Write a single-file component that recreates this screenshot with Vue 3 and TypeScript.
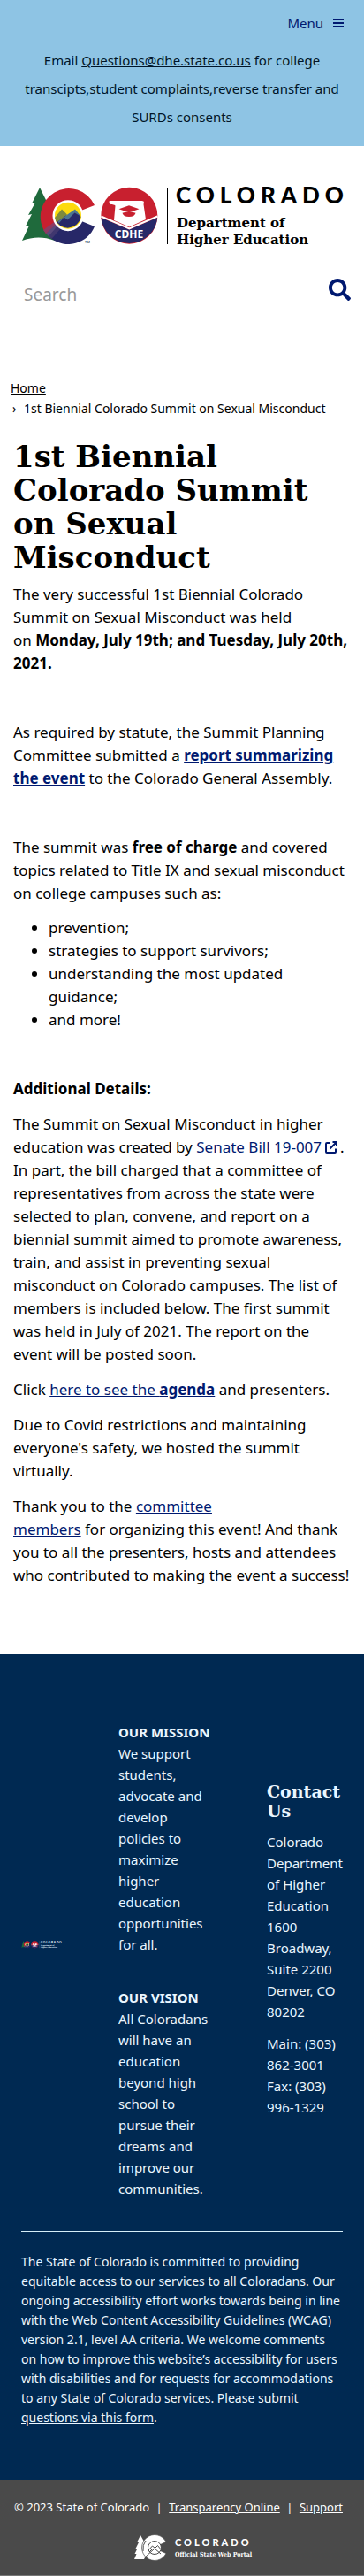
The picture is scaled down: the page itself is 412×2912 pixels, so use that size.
<script setup lang="ts">
import { ref } from 'vue'

const query = ref('')
const menuOpen = ref(false)
const topics: string[] = [
  'prevention;',
  'strategies to support survivors;',
  'understanding the most updated guidance;',
  'and more!',
]
</script>

<template>
  <div class="page">
    <svg class="defs" aria-hidden="true">
      <symbol id="co-logo" viewBox="24 210 366 70" overflow="visible">
        <path
          fill="#1f6a3c"
          d="M45 212 36 230l4-1-8 14 4-1-7 13.500 4-.5-8 17c12-4.500 24-5 37 0l8-10V226L54 230z"
        />
        <path
          fill="#c8202f"
          d="M77 243.700 107 232A32 32 0 1 0 52 264z"
        />
        <path fill="#272868" d="M77 243.700 107 256A32 32 0 0 1 58 269.500z" />
        <path fill="#8d3a63" d="M64 249 49 260l3 4 15-13z" />
        <path fill="#5a4a7c" d="M66 251 52 264l3 3 14-13z" />
        <path fill="#40376f" d="M68 252 55 267l3.500 3 13-15z" />
        <circle cx="77" cy="243.700" r="17.500" fill="#fff" />
        <circle cx="77" cy="243.700" r="15" fill="#fcdb0d" />
        <path fill="#272868" d="M62.500 247.500 70 240l7 5 8-7 6.500 7A15 15 0 0 1 62.500 247.500z" />
        <path fill="#7d8b3c" d="M62 246 70 236.500l6 6-12 9z" />
        <path fill="#4c7690" d="M66 250 77 242l8-5.500 6.500 8-7-4-8 8-4-3-6 7z" />
        <text x="96" y="275" class="tm">TM</text>
        <circle cx="146.300" cy="243.700" r="32" fill="#c8202f" />
        <path fill="#272868" d="M114.500 246A32 32 0 0 0 178.200 246L146.300 259.500z" />
        <path
          fill="none"
          stroke="#fff"
          stroke-width="2"
          d="M114.400 244.500 146.300 258.300 178.200 244.500"
        />
        <path
          fill="#fff"
          d="M124 227h36.500c3 0 2.500 2 2 4l2.500 17-18.700 8.500L129 249l1.500-16.500c-1-1.500-3-.5-5-1.500-2-1-2.500-3.500-1.500-4z"
        />
        <path fill="#c8202f" d="m134.500 236.300 11.500-4 11.500 4-11.500 4z" />
        <path fill="#c8202f" d="M138.500 240.800q7.500-2.500 15 0-1 4.200-7.500 4.200t-7.500-4.200z" />
        <text x="146" y="269" class="badge">CDHE</text>
        <path stroke="currentColor" stroke-width="1" d="M189.500 212v64" />
        <text x="199" y="230" class="wordmark">COLORADO</text>
        <text x="200" y="257" class="dept">Department of</text>
        <text x="200" y="276" class="dept">Higher Education</text>
      </symbol>
    </svg>

    <header>
      <div class="banner">
        <button class="menu" type="button" :aria-expanded="menuOpen" @click="menuOpen = !menuOpen">
          Menu
          <svg width="12" height="12" viewBox="0 0 12 12" aria-hidden="true">
            <path d="M0 1h12v2H0zM0 5h12v2H0zM0 9h12v2H0z" fill="currentColor" />
          </svg>
        </button>
        <p>
          Email <a href="#email">Questions@dhe.state.co.us</a> for college transcipts,student
          complaints,reverse transfer and SURDs consents
        </p>
      </div>
      <a class="logo" href="#home" aria-label="Colorado Department of Higher Education">
        <svg viewBox="0 0 366 70" aria-hidden="true"><use href="#co-logo" width="366" height="70" /></svg>
      </a>
      <form class="search" role="search" @submit.prevent>
        <input v-model="query" type="search" placeholder="Search" aria-label="Search" />
        <button type="submit" aria-label="Search">
          <svg width="25" height="25" viewBox="0 0 512 512" aria-hidden="true">
            <path
              fill="currentColor"
              d="M505 442.700 405.300 343c-4.500-4.500-10.600-7-17-7H372c27.600-35.300 44-79.700 44-128C416 93.100 322.900 0 208 0S0 93.100 0 208s93.100 208 208 208c48.300 0 92.700-16.400 128-44v16.300c0 6.400 2.500 12.500 7 17l99.700 99.700c9.400 9.400 24.600 9.400 33.900 0l28.300-28.300c9.400-9.400 9.400-24.600.1-34zM208 336c-70.700 0-128-57.200-128-128 0-70.700 57.200-128 128-128 70.700 0 128 57.200 128 128 0 70.700-57.200 128-128 128z"
            />
          </svg>
        </button>
      </form>
    </header>

    <nav class="crumbs" aria-label="Breadcrumb">
      <ol>
        <li><a href="#home">Home</a></li>
        <li class="current"><span class="sep">›</span>1st Biennial Colorado Summit on Sexual Misconduct</li>
      </ol>
    </nav>

    <main>
      <h1>1st Biennial Colorado Summit on Sexual Misconduct</h1>
      <section class="intro">
        <p>
          The very successful 1st Biennial Colorado Summit on Sexual Misconduct was held
          on&nbsp;<strong>Monday, July 19th; and Tuesday, July 20th, 2021.</strong>
        </p>
        <p>
          As required by statute, the Summit Planning Committee submitted a
          <a href="#report"><strong>report summarizing the event</strong></a> to the Colorado General
          Assembly.
        </p>
        <div>
          <p>
            The summit was <strong>free of charge</strong> and covered topics related to Title IX and
            sexual misconduct on college campuses such as:
          </p>
          <ul>
            <li v-for="topic in topics" :key="topic">{{ topic }}</li>
          </ul>
        </div>
      </section>
      <section class="details">
        <h2>Additional Details:</h2>
        <p>
          The Summit on Sexual Misconduct in higher education was created by
          <a class="external" href="#sb19-007"><span>Senate Bill 19-007</span><svg
            width="14" height="14" viewBox="0 0 14 14" aria-hidden="true"
          ><path
            d="M6 2H2Q1 2 1 3v9q0 1 1 1h9q1 0 1-1V8.500M8.500 1H13v4.500M13 1 5.500 8.500"
            fill="none" stroke="currentColor" stroke-width="2"
          /></svg></a>. In part, the bill charged that a committee of representatives from across the
          state were selected to plan, convene, and report on a biennial summit aimed to promote
          awareness, train, and assist in preventing sexual misconduct on Colorado campuses. The list of
          members is included below. The first summit was held in July of 2021. The report on the event
          will be posted soon.
        </p>
        <p>Click <a href="#agenda">here to see the <strong>agenda</strong></a> and presenters.</p>
        <p>Due to Covid restrictions and maintaining everyone's safety, we hosted the summit virtually.</p>
        <p>
          Thank you to the <a href="#committee">committee members</a>&nbsp;for&nbsp;organizing this event!
          And thank you to all the presenters, hosts and attendees who contributed to making the event a
          success!
        </p>
      </section>
    </main>

    <footer>
      <div class="about">
        <div class="columns">
          <svg class="mini" viewBox="0 0 366 70" role="img" aria-label="Colorado Department of Higher Education">
            <use href="#co-logo" width="366" height="70" />
          </svg>
          <div class="purpose">
            <section>
              <h2>OUR MISSION</h2>
              <p>
                We support students, advocate and develop policies to maximize higher education
                opportunities for all.
              </p>
            </section>
            <section>
              <h2>OUR VISION</h2>
              <p>
                All Coloradans will have an education beyond high school to pursue their dreams and
                improve our communities.
              </p>
            </section>
          </div>
          <address>
            <h2>Contact Us</h2>
            <p>Colorado Department of Higher Education<br />1600 Broadway, Suite 2200<br />Denver, CO 80202</p>
            <p>Main: (303) 862-3001<br />Fax: (303) 996-1329</p>
          </address>
        </div>
        <p class="access">
          The State of Colorado is committed to providing equitable access to our services to all
          Coloradans. Our ongoing accessibility effort works towards being in line with the Web Content
          Accessibility Guidelines (WCAG) version 2.1, level AA criteria. We welcome comments on how to
          improve this website’s accessibility for users with disabilities and for requests for
          accommodations to any State of Colorado services. Please submit
          <a href="#form">questions via this form</a>.
        </p>
      </div>
      <div class="legal">
        <div class="links">
          <span>© 2023 State of Colorado</span>
          <span>|</span>
          <a href="#transparency">Transparency Online</a>
          <span>|</span>
          <a href="#support">Support</a>
        </div>
        <a class="portal" href="#portal" aria-label="Colorado Official State Web Portal">
          <svg width="138" height="30" viewBox="0 0 138 30" aria-hidden="true">
            <path fill="#fff" d="M8 1 4 9h2l-4 8h2L1.500 22h2L1 28h11l6-12-6-8z" />
            <path fill="#fff" stroke="#4a4a4a" stroke-width=".7" d="m23 15 14-6.500a14.500 14.500 0 1 0 0 13z" />
            <circle cx="24" cy="15" r="7.500" fill="#fff" stroke="#4a4a4a" stroke-width="1" />
            <path
              fill="none" stroke="#4a4a4a" stroke-width="1"
              d="m17 18 4.500-5 3 2.500 3-3 4 5M18 20l4-4M13 26l11-10 7 6M14 7q-4 5-3 12"
            />
            <path stroke="#8a8a8a" d="M42.500 1v28" />
            <text x="47" y="13" class="portal-name">COLORADO</text>
            <text x="47" y="25" class="portal-line">Official State Web Portal</text>
          </svg>
        </a>
      </div>
    </footer>
  </div>
</template>

<style>
body {
  margin: 0;
  background: #fff;
}
</style>

<style scoped>
.page {
  color: #000;
  font-family: "Noto Sans", "Open Sans", sans-serif;
  font-size: 17px;
  line-height: 26px;
}
p, h1, h2, ol {
  margin: 0;
}
svg {
  overflow: visible;
}
.defs {
  display: block;
  width: 0;
  height: 0;
}
.tm {
  font-size: 4px;
  fill: currentColor;
}
.badge {
  font: 700 12px "Noto Sans", sans-serif;
  fill: #fff;
  text-anchor: middle;
}
.wordmark {
  font: 900 26px Lato, sans-serif;
  letter-spacing: 6px;
  fill: currentColor;
}
.dept {
  font: 700 15px "DejaVu Serif", serif;
  fill: currentColor;
}
.banner {
  display: flex;
  flex-direction: column;
  gap: 15px;
  padding: 15px 23px 17px;
  background: #8ec4e4;
  color: #001528;
  font-size: 15px;
  line-height: 32px;
  text-align: center;
}
.banner a {
  color: #001528;
}
.menu {
  display: flex;
  align-items: center;
  align-self: flex-end;
  gap: 11px;
  padding: 0;
  border: 0;
  background: none;
  color: #001970;
  font-family: inherit;
  font-size: 15px;
  line-height: 22px;
}
.logo {
  display: block;
  margin: 45px 22px 33px 24px;
  color: #000;
}
.logo svg, .mini {
  display: block;
  width: 100%;
}
.search {
  display: flex;
  align-items: flex-start;
  padding: 0 15px 0 27px;
}
.search input {
  flex: 1;
  min-width: 0;
  height: 40px;
  padding: 0;
  border: 0;
  background: none;
  color: #000;
  font-family: inherit;
  font-size: 19px;
}
.search input::placeholder {
  color: #999;
}
.search button {
  display: flex;
  padding: 2px 0 0;
  border: 0;
  background: none;
  color: #001970;
}
.crumbs {
  padding: 74px 12px 0;
  font-size: 14px;
  line-height: 23px;
}
.crumbs ol {
  padding: 0;
  list-style: none;
}
.crumbs a {
  color: #000;
}
.sep {
  display: inline-block;
  width: 13px;
  padding-left: 2px;
}
main {
  padding: 24px 15px 76px;
}
h1 {
  margin-bottom: 10px;
  font-family: "DejaVu Serif", serif;
  font-size: 34px;
  line-height: 38px;
}
main a {
  color: #001970;
}
.intro {
  display: flex;
  flex-direction: column;
  gap: 52px;
}
ul {
  margin: 13px 40px 0 0;
  padding-left: 40px;
}
.details {
  display: flex;
  flex-direction: column;
  gap: 14px;
  margin-top: 52px;
}
.details h2 {
  font-size: 17px;
}
.external {
  text-decoration: none;
  white-space: nowrap;
}
.external span {
  text-decoration: underline;
}
.external svg {
  margin: 0 3px 0 4px;
  vertical-align: -1px;
}
.about {
  padding: 76px 24px 59px;
  background: #002952;
  color: #eaf6ff;
}
.columns {
  display: grid;
  grid-template-columns: 46px 1fr 86px;
  column-gap: 64px;
  align-items: center;
  padding-bottom: 36px;
  border-bottom: 1px solid #d5eef8;
  font-size: 15px;
  line-height: 24px;
}
.mini {
  padding-bottom: 36px;
}
.purpose {
  display: flex;
  flex-direction: column;
  gap: 36px;
}
.purpose h2 {
  font-size: 15px;
  white-space: nowrap;
}
address {
  display: flex;
  flex-direction: column;
  gap: 12px;
  padding-bottom: 24px;
  font-style: normal;
}
address h2 {
  font-family: "DejaVu Serif", serif;
  font-size: 19px;
  line-height: 22px;
}
.access {
  margin-top: 23px;
  font-size: 14px;
  line-height: 22px;
}
.about a, .legal a {
  color: inherit;
}
.legal {
  padding: 23px 24px 4px 16px;
  border-bottom: 1px solid #777;
  background: #4a4a4a;
  color: #fff;
}
.links {
  display: flex;
  justify-content: space-between;
  font-size: 13px;
  line-height: 16px;
}
.portal {
  display: flex;
  justify-content: center;
  padding: 23px 0 12px 36px;
}
.portal-name {
  font: 900 11px Lato, sans-serif;
  letter-spacing: 3px;
  fill: #fff;
}
.portal-line {
  font: 700 7px "DejaVu Serif Condensed", "DejaVu Serif", serif;
  fill: #fff;
}
</style>
